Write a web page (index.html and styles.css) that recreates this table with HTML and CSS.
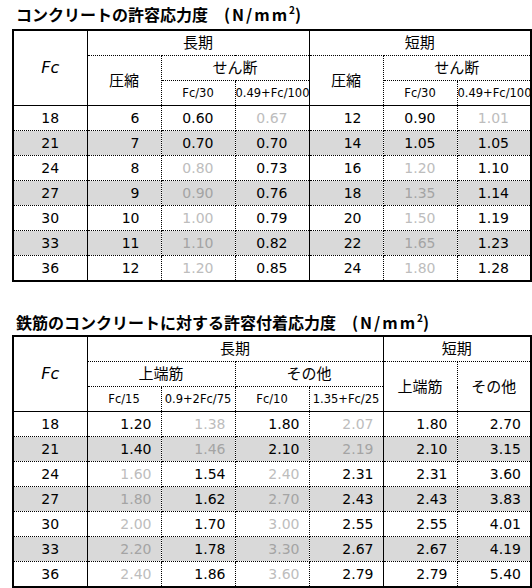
FILE: index.html
```html
<!DOCTYPE html>
<html lang="ja">
<head>
<meta charset="utf-8">
<title>許容応力度</title>
<link rel="stylesheet" href="styles.css">
</head>
<body>
<h2 class="title t1">コンクリートの許容応力度　<span class="unit">(N/mm<sup>2</sup>)</span></h2>
<table class="grid g1">
  <colgroup><col><col><col><col><col><col><col></colgroup>
  <thead>
    <tr><th rowspan="3" class="fc sr">Fc</th><th colspan="3" class="sr">長期</th><th colspan="3">短期</th></tr>
    <tr><th rowspan="2">圧縮</th><th colspan="2" class="sr">せん断</th><th rowspan="2">圧縮</th><th colspan="2">せん断</th></tr>
    <tr><th class="sm">Fc/30</th><th class="sm sr">0.49+Fc/100</th><th class="sm">Fc/30</th><th class="sm">0.49+Fc/100</th></tr>
  </thead>
  <tbody>
    <tr><td>18</td><td>6</td><td>0.60</td><td class="dim">0.67</td><td>12</td><td>0.90</td><td class="dim">1.01</td></tr>
    <tr><td>21</td><td>7</td><td>0.70</td><td>0.70</td><td>14</td><td>1.05</td><td>1.05</td></tr>
    <tr><td>24</td><td>8</td><td class="dim">0.80</td><td>0.73</td><td>16</td><td class="dim">1.20</td><td>1.10</td></tr>
    <tr><td>27</td><td>9</td><td class="dim">0.90</td><td>0.76</td><td>18</td><td class="dim">1.35</td><td>1.14</td></tr>
    <tr><td>30</td><td>10</td><td class="dim">1.00</td><td>0.79</td><td>20</td><td class="dim">1.50</td><td>1.19</td></tr>
    <tr><td>33</td><td>11</td><td class="dim">1.10</td><td>0.82</td><td>22</td><td class="dim">1.65</td><td>1.23</td></tr>
    <tr><td>36</td><td>12</td><td class="dim">1.20</td><td>0.85</td><td>24</td><td class="dim">1.80</td><td>1.28</td></tr>
  </tbody>
</table>

<h2 class="title t2">鉄筋のコンクリートに対する許容付着応力度　<span class="unit">(N/mm<sup>2</sup>)</span></h2>
<table class="grid g2">
  <colgroup><col><col><col><col><col><col><col></colgroup>
  <thead>
    <tr><th rowspan="3" class="fc sr">Fc</th><th colspan="4" class="sr">長期</th><th colspan="2">短期</th></tr>
    <tr><th colspan="2">上端筋</th><th colspan="2" class="sr">その他</th><th rowspan="2">上端筋</th><th rowspan="2">その他</th></tr>
    <tr><th class="sm">Fc/15</th><th class="sm">0.9+2Fc/75</th><th class="sm">Fc/10</th><th class="sm sr">1.35+Fc/25</th></tr>
  </thead>
  <tbody>
    <tr><td>18</td><td>1.20</td><td class="dim">1.38</td><td>1.80</td><td class="dim">2.07</td><td>1.80</td><td>2.70</td></tr>
    <tr><td>21</td><td>1.40</td><td class="dim">1.46</td><td>2.10</td><td class="dim">2.19</td><td>2.10</td><td>3.15</td></tr>
    <tr><td>24</td><td class="dim">1.60</td><td>1.54</td><td class="dim">2.40</td><td>2.31</td><td>2.31</td><td>3.60</td></tr>
    <tr><td>27</td><td class="dim">1.80</td><td>1.62</td><td class="dim">2.70</td><td>2.43</td><td>2.43</td><td>3.83</td></tr>
    <tr><td>30</td><td class="dim">2.00</td><td>1.70</td><td class="dim">3.00</td><td>2.55</td><td>2.55</td><td>4.01</td></tr>
    <tr><td>33</td><td class="dim">2.20</td><td>1.78</td><td class="dim">3.30</td><td>2.67</td><td>2.67</td><td>4.19</td></tr>
    <tr><td>36</td><td class="dim">2.40</td><td>1.86</td><td class="dim">3.60</td><td>2.79</td><td>2.79</td><td>5.40</td></tr>
  </tbody>
</table>
</body>
</html>
```

FILE: styles.css
```css
html, body {
  margin: 0;
  padding: 0;
  background: #ffffff;
}

body {
  width: 532px;
  height: 588px;
  overflow: hidden;
  color: #000;
  font-family: "DejaVu Sans", "Noto Sans CJK JP", sans-serif;
}

.title {
  margin: 0;
  padding-left: 16px;
  font-family: "Noto Sans CJK JP", sans-serif;
  font-weight: 700;
  font-size: 16px;
  white-space: nowrap;
}

.t1 {
  height: 29px;
  line-height: 29px;
}

.t2 {
  margin-top: 27px;
  height: 26px;
  line-height: 26px;
}

.unit {
  letter-spacing: 2px;
}

.unit sup {
  font-size: 10px;
  line-height: 0;
  vertical-align: 7px;
  letter-spacing: 0;
}

.grid {
  border-collapse: collapse;
  table-layout: fixed;
  width: 520px;
  margin-left: 12px;
  border: 2px solid #000;
}

.grid th,
.grid td {
  border: 1px dotted #000;
  padding: 0;
  height: 24px;
  line-height: 24px;
  white-space: nowrap;
  overflow: hidden;
}

.grid th {
  font-weight: 400;
  font-size: 15px;
  text-align: center;
}

.grid th.fc {
  font-style: italic;
  font-size: 16px;
}

.grid th.sm {
  font-size: 11.5px;
}

.grid .sr {
  border-right: 1px solid #000;
}

.grid tbody tr:first-child td {
  border-top: 1px solid #000;
}

.grid td {
  font-size: 14px;
  text-align: right;
}

.g1 td {
  padding-right: 21px;
}

.g2 td {
  padding-right: 9px;
}

.grid td:first-child {
  text-align: center;
  padding-right: 0;
  border-right: 1px solid #000;
}

.g1 td:nth-child(4),
.g2 td:nth-child(5) {
  border-right: 1px solid #000;
}

.grid tbody tr:nth-child(even) td {
  background: #d9d9d9;
}

.grid td.dim {
  color: #bdbdbd;
}

.grid tbody tr:nth-child(even) td.dim {
  color: #a4a4a4;
}
```
